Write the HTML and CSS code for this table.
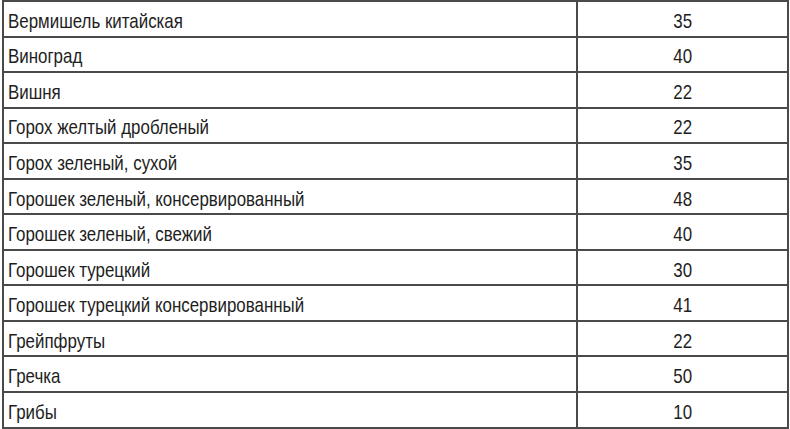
FILE: index.html
```html
<!DOCTYPE html>
<html>
<head>
<meta charset="utf-8">
<link rel="stylesheet" href="styles.css">
</head>
<body>
<div class="wrap">
<table class="gi">
<tbody>
<tr><td class="name"><span class="t">Вермишель китайская</span></td><td class="val"><span class="t">35</span></td></tr>
<tr><td class="name"><span class="t">Виноград</span></td><td class="val"><span class="t">40</span></td></tr>
<tr><td class="name"><span class="t">Вишня</span></td><td class="val"><span class="t">22</span></td></tr>
<tr><td class="name"><span class="t">Горох желтый дробленый</span></td><td class="val"><span class="t">22</span></td></tr>
<tr><td class="name"><span class="t">Горох зеленый, сухой</span></td><td class="val"><span class="t">35</span></td></tr>
<tr><td class="name"><span class="t">Горошек зеленый, консервированный</span></td><td class="val"><span class="t">48</span></td></tr>
<tr><td class="name"><span class="t">Горошек зеленый, свежий</span></td><td class="val"><span class="t">40</span></td></tr>
<tr><td class="name"><span class="t">Горошек турецкий</span></td><td class="val"><span class="t">30</span></td></tr>
<tr><td class="name"><span class="t">Горошек турецкий консервированный</span></td><td class="val"><span class="t">41</span></td></tr>
<tr><td class="name"><span class="t">Грейпфруты</span></td><td class="val"><span class="t">22</span></td></tr>
<tr><td class="name"><span class="t">Гречка</span></td><td class="val"><span class="t">50</span></td></tr>
<tr><td class="name"><span class="t">Грибы</span></td><td class="val"><span class="t">10</span></td></tr>
</tbody>
</table>
</div>
</body>
</html>
```
FILE: styles.css
```css
html, body {
  margin: 0;
  padding: 0;
  background: #ffffff;
}
.wrap {
  padding: 0 1px 0 2px;
}
.gi {
  width: 787px;
  border-collapse: collapse;
  table-layout: fixed;
  font-family: "Liberation Sans", Arial, sans-serif;
  font-size: 21px;
  color: #1e1e1e;
}
.gi tr {
  height: 35.55px;
}
.gi td {
  border: 2px solid #4a4a4a;
  padding: 3px 0 0 0;
  line-height: 1;
  vertical-align: middle;
  white-space: nowrap;
}
.gi .name {
  width: 568px;
  padding-left: 4px;
  text-align: left;
}
.gi .val {
  text-align: center;
}
.t {
  display: inline-block;
  transform: scaleX(0.805);
  transform-origin: left center;
}
.val .t {
  transform-origin: center center;
}
```
